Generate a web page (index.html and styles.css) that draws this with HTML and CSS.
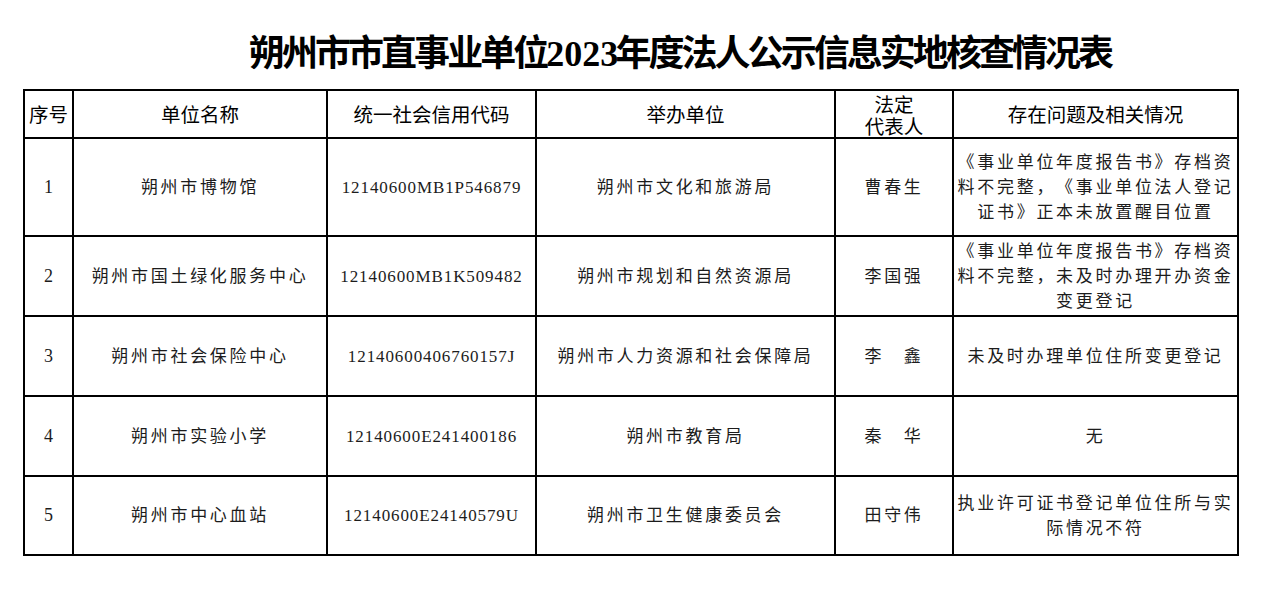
FILE: index.html
```html
<!DOCTYPE html>
<html lang="zh-CN">
<head>
<meta charset="utf-8">
<title>朔州市市直事业单位2023年度法人公示信息实地核查情况表</title>
<link rel="stylesheet" href="styles.css">
</head>
<body>
<div class="page">
  <h1 class="title">朔州市市直事业单位<span class="year">2023</span>年度法人公示信息实地核查情况表</h1>
  <table class="sheet">
    <colgroup>
      <col class="c-no">
      <col class="c-name">
      <col class="c-code">
      <col class="c-org">
      <col class="c-rep">
      <col class="c-issue">
    </colgroup>
    <thead>
      <tr class="row-head">
        <th>序号</th>
        <th>单位名称</th>
        <th>统一社会信用代码</th>
        <th>举办单位</th>
        <th class="two-line">法定<br>代表人</th>
        <th>存在问题及相关情况</th>
      </tr>
    </thead>
    <tbody>
      <tr class="row-1">
        <td class="num">1</td>
        <td>朔州市博物馆</td>
        <td class="code">12140600MB1P546879</td>
        <td>朔州市文化和旅游局</td>
        <td>曹春生</td>
        <td class="issue">《事业单位年度报告书》存档资<br>料不完整，《事业单位法人登记<br>证书》正本未放置醒目位置</td>
      </tr>
      <tr class="row-2">
        <td class="num">2</td>
        <td>朔州市国土绿化服务中心</td>
        <td class="code">12140600MB1K509482</td>
        <td>朔州市规划和自然资源局</td>
        <td>李国强</td>
        <td class="issue">《事业单位年度报告书》存档资<br>料不完整，未及时办理开办资金<br>变更登记</td>
      </tr>
      <tr class="row-3">
        <td class="num">3</td>
        <td>朔州市社会保险中心</td>
        <td class="code">12140600406760157J</td>
        <td>朔州市人力资源和社会保障局</td>
        <td>李　鑫</td>
        <td class="issue">未及时办理单位住所变更登记</td>
      </tr>
      <tr class="row-4">
        <td class="num">4</td>
        <td>朔州市实验小学</td>
        <td class="code">12140600E241400186</td>
        <td>朔州市教育局</td>
        <td>秦　华</td>
        <td class="issue">无</td>
      </tr>
      <tr class="row-5">
        <td class="num">5</td>
        <td>朔州市中心血站</td>
        <td class="code">12140600E24140579U</td>
        <td>朔州市卫生健康委员会</td>
        <td>田守伟</td>
        <td class="issue">执业许可证书登记单位住所与实<br>际情况不符</td>
      </tr>
    </tbody>
  </table>
</div>
</body>
</html>
```

FILE: styles.css
```css
html, body {
  margin: 0;
  padding: 0;
  background: #ffffff;
}

.page {
  padding: 36px 0 0 23px;
  text-spacing-trim: space-all;
}

.title {
  margin: 0 0 17px 0;
  width: 1216px;
  box-sizing: border-box;
  padding-left: 98px;
  text-align: center;
  font-family: "Liberation Serif", "Noto Sans CJK SC", serif;
  font-weight: 700;
  font-size: 36px;
  line-height: 36px;
  letter-spacing: -2.95px;
  color: #000000;
  white-space: nowrap;
}

.title .year {
  letter-spacing: 0;
  margin-right: -2.95px;
}

.sheet {
  border-collapse: collapse;
  table-layout: fixed;
  width: 1216px;
}

.c-no { width: 49px; }
.c-name { width: 254px; }
.c-code { width: 209px; }
.c-org { width: 299px; }
.c-rep { width: 118px; }
.c-issue { width: 285px; }

.sheet th,
.sheet td {
  border: 2px solid #000000;
  padding: 0;
  text-align: center;
  vertical-align: middle;
  overflow: hidden;
  text-spacing-trim: space-all;
}

.sheet th {
  font-family: "Noto Sans CJK SC", sans-serif;
  font-weight: 400;
  font-size: 19.5px;
  line-height: 24px;
  color: #000000;
}

.sheet th.two-line {
  line-height: 22px;
  padding-top: 1px;
}

.sheet td {
  font-family: "Liberation Serif", "Noto Sans CJK SC", serif;
  font-size: 17px;
  line-height: 25px;
  letter-spacing: 2.7px;
  color: #1c1c1c;
  white-space: nowrap;
}

.sheet td.num {
  letter-spacing: 0;
  font-size: 18px;
}

.sheet td.code {
  letter-spacing: 0.9px;
  font-size: 17px;
}

.sheet td.issue {
  line-height: 25px;
}

.row-head { height: 48px; }
.row-1 { height: 98px; }
.row-2 { height: 80px; }
.row-3 { height: 80px; }
.row-4 { height: 80px; }
.row-5 { height: 79px; }
```
